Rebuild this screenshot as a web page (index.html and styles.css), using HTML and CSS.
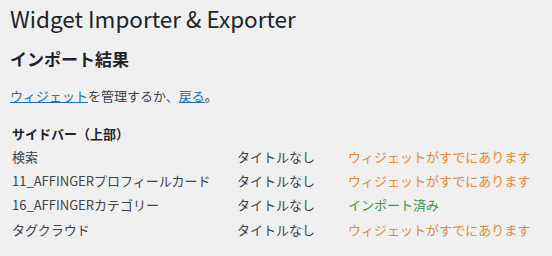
FILE: index.html
```html
<!DOCTYPE html>
<html>

<head>
    <link rel="stylesheet" href="styles.css">
    <title>Widget Importer &amp; Exporter</title>
</head>

<body>
    <div class="wrap">
        <h1>Widget Importer &amp; Exporter</h1>

        <h2>インポート結果</h2>

        <p><a href="#">ウィジェット</a>を管理するか、<a href="#">戻る</a>。</p>

        <table class="results">
            <tr>
                <td colspan="3" class="sidebar">サイドバー（上部）</td>
            </tr>
            <tr>
                <td>検索</td>
                <td>タイトルなし</td>
                <td class="warn">ウィジェットがすでにあります</td>
            </tr>
            <tr>
                <td>11_AFFINGERプロフィールカード</td>
                <td>タイトルなし</td>
                <td class="warn">ウィジェットがすでにあります</td>
            </tr>
            <tr>
                <td>16_AFFINGERカテゴリー</td>
                <td>タイトルなし</td>
                <td class="ok">インポート済み</td>
            </tr>
            <tr>
                <td>タグクラウド</td>
                <td>タイトルなし</td>
                <td class="warn">ウィジェットがすでにあります</td>
            </tr>
        </table>
    </div>
</body>

</html>
```

FILE: styles.css
```css
body {
    margin: 0;
    background: #f0f0f1;
    color: #3c434a;
    font-family: "Noto Sans CJK JP", "Noto Sans", sans-serif;
    font-size: 13px;
}

.wrap {
    padding: 0 10px;
}

h1 {
    margin: 0;
    padding: 4px 0 0;
    font-size: 22.5px;
    font-weight: 400;
    line-height: 29px;
    color: #1d2327;
}

h2 {
    margin: 14px 0 0;
    font-size: 17px;
    line-height: 24px;
    color: #1d2327;
}

p {
    margin: 15px 0 0;
    line-height: 19px;
}

a {
    color: #2271b1;
}

.results {
    margin-top: 17px;
    border-collapse: collapse;
}

.results td {
    padding: 0 0 0 2px;
    height: 24.4px;
    vertical-align: middle;
}

.results .sidebar {
    height: 22px;
}

.results td:nth-child(1) {
    width: 223px;
}

.results td:nth-child(2) {
    width: 109px;
}

.sidebar {
    font-weight: 700;
    color: #1d2327;
}

.warn {
    color: #e08b3a;
}

.ok {
    color: #3c973c;
}
```
